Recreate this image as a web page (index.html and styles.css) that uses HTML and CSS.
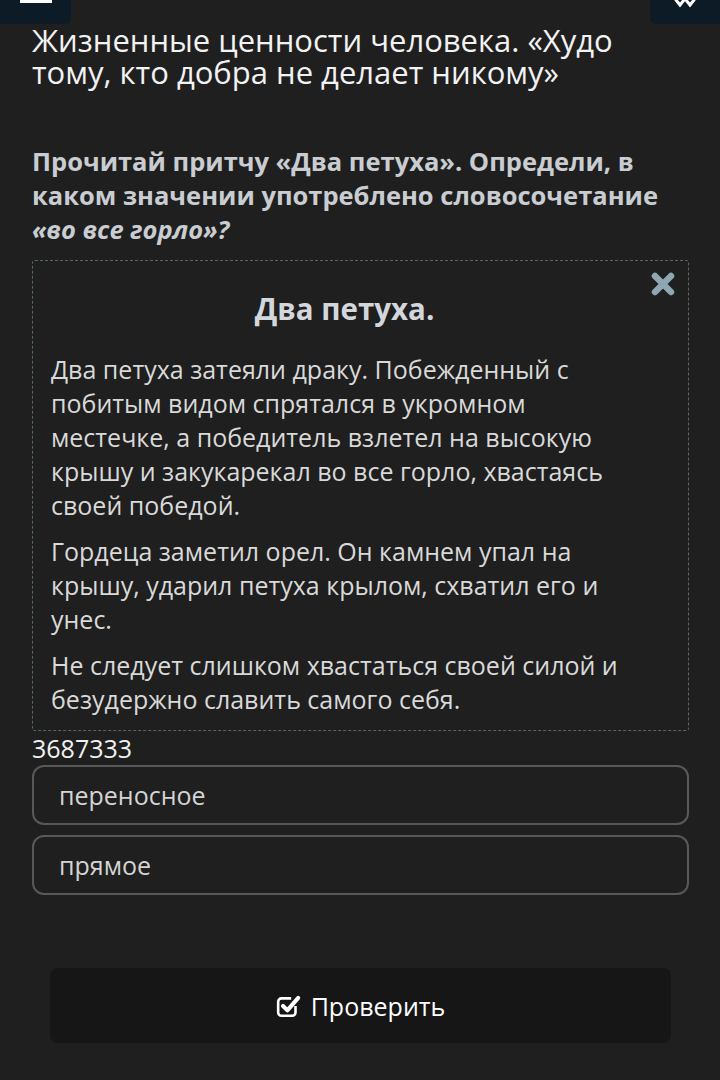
FILE: index.html
```html
<!DOCTYPE html>
<html>
<head>
  <meta charset="UTF-8">
  <title>Жизненные ценности человека</title>
  <link rel="stylesheet" href="styles.css">
</head>
<body>
  <div class="topbar">
    <div class="nav-btn nav-left"><span class="bar"></span></div>
    <div class="nav-btn nav-right">
      <svg width="22" height="8" viewBox="0 0 22 8"><path d="M2 0 L6 5 L10 0 M12 0 L16 5 L20 0" stroke="#fff" stroke-width="3" fill="none" stroke-linecap="round"/></svg>
    </div>
  </div>

  <div class="page">
    <h1 class="lesson-title">Жизненные ценности человека. «Худо тому, кто добра не делает никому»</h1>

    <p class="task">Прочитай притчу «Два петуха». Определи, в каком значении употреблено словосочетание <em>«во все горло»?</em></p>

    <!-- Story box -->
    <div class="story">
      <svg class="close" width="26" height="26" viewBox="0 0 26 26">
        <path d="M5 5 L21 21 M21 5 L5 21" stroke="#8fa6b3" stroke-width="6.5" stroke-linecap="round"/>
      </svg>
      <h2>Два петуха.</h2>
      <p>Два петуха затеяли драку. Побежденный с побитым видом спрятался в укромном местечке, а победитель взлетел на высокую крышу и закукарекал во все горло, хвастаясь своей победой.</p>
      <p>Гордеца заметил орел. Он камнем упал на крышу, ударил петуха крылом, схватил его и унес.</p>
      <p>Не следует слишком хвастаться своей силой и безудержно славить самого себя.</p>
    </div>

    <div class="code">3687333</div>

    <div class="options">
      <div class="option">переносное</div>
      <div class="option">прямое</div>
    </div>

    <button class="check-btn">
      <svg width="26" height="26" viewBox="0 0 24 24">
        <path d="M18 12 V18 a3 3 0 0 1 -3 3 H5 a3 3 0 0 1 -3 -3 V8 a3 3 0 0 1 3 -3 H14" stroke="#fff" stroke-width="2.4" fill="none"/>
        <path d="M6.5 12 L10.5 16 L20.5 4.5" stroke="#fff" stroke-width="3.8" fill="none" stroke-linecap="round" stroke-linejoin="round"/>
      </svg>
      Проверить
    </button>
  </div>
</body>
</html>
```

FILE: styles.css
```css
body {
  margin: 0;
  background: #1f1f1f;
  font-family: 'Open Sans', sans-serif;
  color: #e6e6e6;
}

.topbar {
  height: 24px;
  display: flex;
  justify-content: space-between;
}

.nav-btn {
  width: 71px;
  height: 24px;
  background: #0c1b25;
}

.nav-left {
  border-radius: 0 0 6px 0;
}

.nav-left .bar {
  display: block;
  margin-left: 20px;
  width: 32px;
  height: 3px;
  background: #fff;
}

.nav-right {
  width: 70px;
  border-radius: 0 0 0 6px;
  display: flex;
  justify-content: center;
  align-items: flex-start;
}

.page {
  padding: 0 31px 40px 32px;
}

.lesson-title {
  margin: 0;
  font-size: 31px;
  font-weight: 400;
  line-height: 32px;
  color: #f2f2f2;
}

.task {
  margin: 56px 0 0;
  font-size: 25.5px;
  font-weight: 700;
  line-height: 34px;
  color: #c9cdd1;
}

.task em {
  font-style: italic;
}

.story {
  position: relative;
  margin-top: 14px;
  border: 1px dashed #56656e;
  border-radius: 3px;
  padding: 29px 50px 14px 18px;
}

.story .close {
  position: absolute;
  top: 10px;
  right: 12px;
}

.story h2 {
  margin: 0 0 24px;
  text-align: center;
  font-size: 29.5px;
  line-height: 38px;
  font-weight: 700;
  color: #d3d7db;
}

.story p {
  margin: 0 0 12px;
  font-size: 25px;
  line-height: 34px;
  color: #d9d9d9;
}

.story p:last-child {
  margin-bottom: 0;
}

.code {
  font-size: 25px;
  line-height: 34px;
  color: #f2f2f2;
}

.options {
  display: flex;
  flex-direction: column;
  gap: 10px;
}

.option {
  height: 56px;
  border: 2px solid #585858;
  border-radius: 12px;
  padding-left: 25px;
  display: flex;
  align-items: center;
  font-size: 25px;
  color: #d4d4d4;
}

.check-btn {
  margin: 73px 18px 0;
  width: calc(100% - 36px);
  height: 75px;
  background: #161616;
  border: none;
  border-radius: 8px;
  color: #fff;
  font-family: 'Open Sans', sans-serif;
  font-size: 25px;
  display: flex;
  justify-content: center;
  align-items: center;
  gap: 9px;
}
```
